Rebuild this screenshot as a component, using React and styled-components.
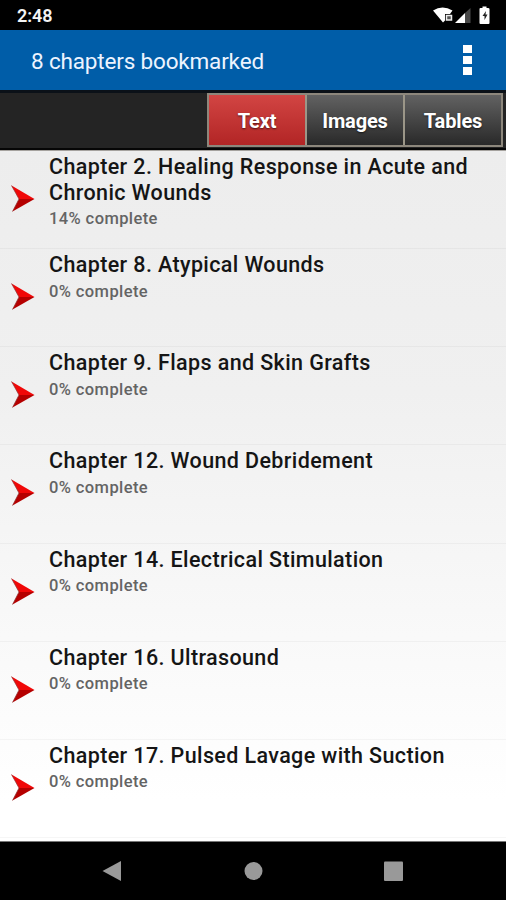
import styled, { createGlobalStyle } from "styled-components";

const GlobalStyle = createGlobalStyle`
  body {
    margin: 0;
    background: #000;
    font-family: Roboto, sans-serif;
  }
`;

const Screen = styled.div`
  display: flex;
  flex-direction: column;
  width: 506px;
  height: 900px;
  overflow: hidden;
`;

const StatusBar = styled.div`
  display: flex;
  align-items: center;
  justify-content: space-between;
  box-sizing: border-box;
  flex: none;
  height: 30px;
  padding: 2px 14px 0 17px;
  background: #000;
`;

const Clock = styled.span`
  color: #f4f4f4;
  font-size: 18px;
  font-weight: 600;
  line-height: 28px;
  letter-spacing: -0.1px;
`;

const StatusIcons = styled.svg`
  display: block;
`;

const AppBar = styled.header`
  display: flex;
  align-items: center;
  justify-content: space-between;
  box-sizing: border-box;
  flex: none;
  height: 60px;
  padding: 0 34px 0 31px;
  background: #005da8;
`;

const AppTitle = styled.h1`
  margin: 0;
  padding-top: 2px;
  color: #edf4ff;
  font-size: 22.5px;
  font-weight: 400;
  line-height: 30px;
  letter-spacing: -0.17px;
`;

const MenuButton = styled.button`
  display: flex;
  flex-direction: column;
  gap: 3px;
  margin: 0;
  border: none;
  padding: 0 0 1px;
  background: none;
`;

const MenuDot = styled.span`
  width: 9px;
  height: 8px;
  background: #fff;
`;

const TabBar = styled.nav`
  display: flex;
  justify-content: flex-end;
  box-sizing: border-box;
  flex: none;
  height: 60px;
  border-top: 3px solid #0b1118;
  border-bottom: 2px solid #060606;
  padding: 0 3px 1px 0;
  background: #242424;
`;

const TabGroup = styled.div`
  display: flex;
  box-sizing: border-box;
  width: 296px;
  border: 2px solid #8d877c;
`;

const Tab = styled.button`
  flex: 1;
  margin: 0;
  border: none;
  border-right: 2px solid #9b9688;
  padding: 2px 0 0;
  background: ${({ $active }) =>
    $active
      ? "linear-gradient(#d24543, #b22525)"
      : "linear-gradient(#626262, #292929)"};
  color: #fff;
  font-family: inherit;
  font-size: 20px;
  font-weight: 700;
  letter-spacing: -0.15px;
  text-shadow: 0 1px 2px rgba(0, 0, 0, 0.6);

  &:last-child {
    border-right: none;
  }
`;

const ChapterList = styled.ul`
  display: flex;
  flex-direction: column;
  box-sizing: border-box;
  flex: 1;
  margin: 0;
  border-top: 1px solid #a5a29e;
  border-bottom: 1px solid #777;
  padding: 0 0 3px;
  list-style: none;
  background: linear-gradient(#ededed, #f0f0f0 35%, #fff 94%);
`;

const ChapterRow = styled.li`
  display: flex;
  box-sizing: border-box;
  flex: 1 1 0;
  min-height: 0;
  border-bottom: 1px solid rgba(0, 0, 0, 0.035);
  padding: 3px 20px 0 11px;
`;

const Arrow = styled.svg`
  flex: none;
  width: 24px;
  height: 28px;
  margin: 30px 14px 0 0;
`;

const ChapterTitle = styled.h2`
  margin: 0;
  color: #151515;
  font-size: 21.5px;
  font-weight: 500;
  line-height: 25.5px;
  letter-spacing: 0.38px;
`;

const Progress = styled.p`
  margin: 3px 0 0;
  color: #646464;
  font-size: 16.5px;
  font-weight: 500;
  line-height: 22px;
  letter-spacing: 0.4px;
`;

const NavBar = styled.footer`
  flex: none;
  height: 58px;
  background: #000;
`;

const chapters = [
  {
    title: "Chapter 2. Healing Response in Acute and Chronic Wounds",
    progress: 14,
  },
  { title: "Chapter 8. Atypical Wounds", progress: 0 },
  { title: "Chapter 9. Flaps and Skin Grafts", progress: 0 },
  { title: "Chapter 12. Wound Debridement", progress: 0 },
  { title: "Chapter 14. Electrical Stimulation", progress: 0 },
  { title: "Chapter 16. Ultrasound", progress: 0 },
  { title: "Chapter 17. Pulsed Lavage with Suction", progress: 0 },
];

const tabs = ["Text", "Images", "Tables"];

const Chapter = ({ title, progress }) => (
  <ChapterRow>
    <Arrow viewBox="0 0 24 28">
      <path d="M.5 1.5 23.5 15H8Z" fill="#f00808" />
      <path d="M8 15h15.5L1.5 27.5Z" fill="#b50000" />
      <path
        d="M.5 1.5 8 15 1.5 27.5"
        fill="none"
        stroke="#8d3030"
        strokeWidth="0.7"
      />
    </Arrow>
    <div>
      <ChapterTitle>{title}</ChapterTitle>
      <Progress>{progress}% complete</Progress>
    </div>
  </ChapterRow>
);

const App = () => (
  <Screen>
    <GlobalStyle />
    <StatusBar>
      <Clock>2:48</Clock>
      <StatusIcons width="60" height="20" viewBox="432 6 60 20">
        <path
          d="M433 10.5Q442.500 4.500 452.500 10.5L450 14H445V20.5L443 22.5Z"
          fill="#fff"
        />
        <path
          d="M446.500 15.500h5v4.500h-5Z"
          fill="#555"
          stroke="#eee"
          strokeWidth="1.500"
        />
        <path d="M455 23 465 13V23Z" fill="#fff" />
        <path d="M465 13 470.5 8V23H465Z" fill="#484848" />
        <path
          d="M481 8h1.500V6.500h4V8h1.500q1.500 0 1.500 1v14q0 1-1 1h-8q-1 0-1-1V9q0-1 1-1Z"
          fill="#fff"
        />
        <path d="m486 11-3.500 5h2v4l3-5.500h-2Z" fill="#222" />
      </StatusIcons>
    </StatusBar>
    <AppBar>
      <AppTitle>8 chapters bookmarked</AppTitle>
      <MenuButton aria-label="More options">
        <MenuDot />
        <MenuDot />
        <MenuDot />
      </MenuButton>
    </AppBar>
    <TabBar>
      <TabGroup>
        {tabs.map((tab) => (
          <Tab key={tab} $active={tab === "Text"}>
            {tab}
          </Tab>
        ))}
      </TabGroup>
    </TabBar>
    <ChapterList>
      {chapters.map((chapter) => (
        <Chapter key={chapter.title} {...chapter} />
      ))}
    </ChapterList>
    <NavBar>
      <svg width="506" height="58" viewBox="0 842 506 58">
        <path d="M102.5 871 121 861V881Z" fill="#999" />
        <circle cx="253.5" cy="871" r="9" fill="#999" />
        <rect x="384" y="861.5" width="19" height="19.5" rx="1" fill="#999" />
      </svg>
    </NavBar>
  </Screen>
);

export default App;
